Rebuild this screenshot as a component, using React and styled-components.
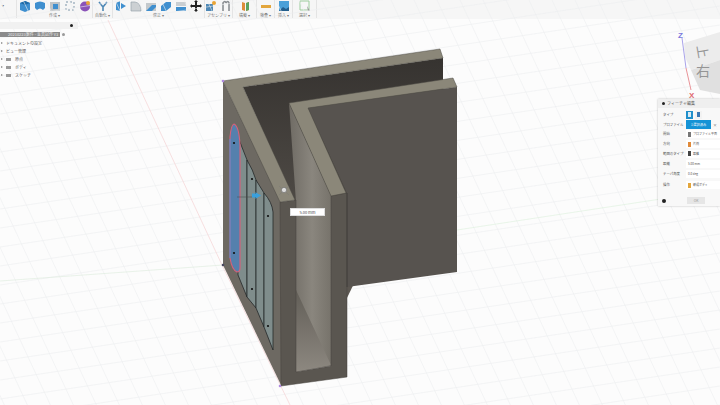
import React from "react";
import styled, { createGlobalStyle } from "styled-components";

const Global = createGlobalStyle`
  html, body { margin: 0; padding: 0; background: #fff; }
  body { font-family: "Noto Sans CJK JP", "Noto Sans", sans-serif; }
`;

const Screen = styled.div`
  position: relative;
  width: 720px;
  height: 405px;
  overflow: hidden;
  background: #fcfcfc;
  display: flex;
  flex-direction: column;
`;

const Toolbar = styled.div`
  height: 19px;
  display: flex;
  flex: none;
  align-items: flex-start;
  background: #f6f6f6;
`;

const LeadGroup = styled.div`
  width: 17px;
  height: 18px;
  flex: none;
  box-sizing: border-box;
  border-right: 1px solid #e4e4e4;
  font-size: 4px;
  line-height: 10px;
  color: #777;
  padding-left: 2px;
`;

const Group = styled.div`
  width: ${(p) => p.$w}px;
  height: 18px;
  flex: none;
  display: flex;
  flex-direction: column;
  align-items: center;
  border-right: 1px solid #e4e4e4;
  box-sizing: border-box;
`;

const IconRow = styled.div`
  height: 12px;
  display: flex;
  gap: 3px;
  justify-content: center;
  align-items: flex-start;
`;

const GroupLabel = styled.div`
  font-size: 4px;
  line-height: 4px;
  margin-top: 1px;
  color: #777;
  white-space: nowrap;
`;

const Stage = styled.div`
  position: relative;
  flex: 1;
`;

const Canvas = styled.svg`
  position: absolute;
  left: 0;
  top: -19px;
  width: 720px;
  height: 405px;
  display: block;
`;

const Browser = styled.div`
  position: absolute;
  left: 0;
  top: 3px;
  width: 78px;
  display: flex;
  flex-direction: column;
  color: #5c5c5c;
`;

const BrowserHead = styled.div`
  height: 7px;
  background: #f1f1f1;
  display: flex;
  justify-content: flex-end;
  align-items: center;
  padding-right: 5px;
  margin-bottom: 3px;
`;

const Dot = styled.span`
  width: ${(p) => p.$s || 3}px;
  height: ${(p) => p.$s || 3}px;
  border-radius: 50%;
  background: ${(p) => p.$c || "#222"};
  flex: none;
`;

const TitleRow = styled.div`
  display: flex;
  align-items: center;
  gap: 2px;
  margin-bottom: 2px;
`;

const DocTitle = styled.div`
  height: 5px;
  width: 52px;
  background: #8b8b8b;
  color: #eee;
  font-size: 4px;
  line-height: 5px;
  padding-left: 8px;
  white-space: nowrap;
  overflow: hidden;
`;

const Node = styled.div`
  height: 8px;
  display: flex;
  align-items: center;
  gap: 3px;
  padding-left: 1px;
  font-size: 4px;
  white-space: nowrap;
`;

const Arrow = styled.span`
  width: 0;
  height: 0;
  border-left: 2px solid #888;
  border-top: 1px solid transparent;
  border-bottom: 1px solid transparent;
  flex: none;
`;

const Folder = styled.span`
  width: 5px;
  height: 3px;
  background: #9a9a9a;
  margin-right: 1px;
  flex: none;
`;

const Dim = styled.div`
  position: absolute;
  left: 290px;
  top: 189px;
  width: 35px;
  height: 8px;
  background: #fff;
  border: 1px solid #ddd;
  box-sizing: border-box;
  font-size: 4px;
  line-height: 6px;
  color: #444;
  display: flex;
  justify-content: center;
`;

const Dialog = styled.div`
  position: absolute;
  left: 658px;
  top: 80px;
  width: 62px;
  height: 107px;
  background: #f8f8f8;
  box-shadow: 0 0 2px rgba(0, 0, 0, 0.25);
  display: flex;
  flex-direction: column;
  color: #555;
  font-size: 4px;
  line-height: 6px;
`;

const DialogTitle = styled.div`
  height: 9px;
  display: flex;
  align-items: center;
  gap: 2px;
  padding-left: 4px;
  background: #efefef;
  white-space: nowrap;
  margin-bottom: 2px;
`;

const Row = styled.div`
  height: ${(p) => p.$h || 10}px;
  display: flex;
  align-items: center;
  padding-left: 5px;
  white-space: nowrap;
`;

const RowLabel = styled.span`
  width: 23px;
  flex: none;
  font-size: 3.4px;
`;

const Field = styled.span`
  display: flex;
  align-items: center;
  gap: 2px;
  height: 8px;
  width: 34px;
  padding-left: 2px;
  background: #fff;
  box-sizing: border-box;
  font-size: 3px;
  overflow: hidden;
`;

const TypeBtn = styled.span`
  width: 7px;
  height: 8px;
  margin-right: 2px;
  background: ${(p) => (p.$on ? "#1f8fcb" : "#f2f2f2")};
  display: flex;
  align-items: center;
  justify-content: center;
`;

const Swatch = styled.span`
  width: 3px;
  height: 5px;
  background: ${(p) => p.$c || "#3b78b5"};
  flex: none;
`;

const ProfileBtn = styled.span`
  width: 25px;
  height: 9px;
  background: #1593d6;
  color: #fff;
  display: flex;
  align-items: center;
  justify-content: center;
  gap: 1px;
  font-size: 3.2px;
`;

const Close = styled.span`
  color: #555;
  font-size: 4px;
  margin-left: 2px;
`;

const Footer = styled.div`
  margin-top: 3px;
  height: 11px;
  display: flex;
  align-items: center;
  padding-left: 4px;
  gap: 21px;
`;

const OkBtn = styled.span`
  width: 18px;
  height: 7px;
  background: #e6e6e6;
  color: #999;
  text-align: center;
  font-size: 3.4px;
  line-height: 7px;
`;

const Tile = ({ c1 = "#3f8fcf", c2 = "#1f6ba8", kind = "box" }) => (
  <svg width="12" height="12" viewBox="0 0 12 12">
    {kind === "box" && <path d="M1 3l5-2 5 2v7l-5 2-5-2z" fill={c1} />}
    {kind === "box" && <path d="M1 3l5 2 5-2-5-2z" fill={c2} />}
    {kind === "wave" && <path d="M1 3q5-3 10 0v5l-2 2q-3-3-6 0l-2-2z" fill={c1} />}
    {kind === "shell" && <path d="M1 2h10v9H1z" fill="#bfc3c6" />}
    {kind === "shell" && <path d="M4 4h5v5H4z" fill={c1} />}
    {kind === "sel" && <path d="M2 2h8v8H2z" fill="none" stroke="#7d95a8" strokeDasharray="2 2" />}
    {kind === "purple" && <circle cx="6" cy="6.5" r="5" fill="#8a52b8" />}
    {kind === "purple" && <circle cx="9" cy="3" r="2" fill="#e9a436" />}
    {kind === "branch" && <path d="M2 2l4 5 4-5M6 7v4" stroke="#4d87b5" strokeWidth="1.6" fill="none" />}
    {kind === "press" && <path d="M1 3l4-2v10l-4-1zM6 3l5 3-5 3z" fill={c1} />}
    {kind === "fillet" && <path d="M1 11V2h4q6 1 6 9z" fill="#ccd0d3" stroke="#8d9aa5" strokeWidth=".6" />}
    {kind === "cham" && <path d="M1 3h10v8H1z" fill="#c4c9cc" />}
    {kind === "cham" && <path d="M1 11l6-6h4v2l-4 4z" fill={c1} />}
    {kind === "two" && <path d="M1 6l5-4h5v5l-5 4H1z" fill={c1} />}
    {kind === "stack" && <path d="M1 2h10v4H1z" fill="#c9ced2" />}
    {kind === "stack" && <path d="M1 7h10v4H1z" fill={c1} />}
    {kind === "move" && <path d="M6 0l2 2H7v3h3V4l2 2-2 2V7H7v3h1l-2 2-2-2h1V7H2v1L0 6l2-2v1h3V2H4z" fill="#222" />}
    {kind === "asm" && <path d="M1 4h7v7H1z" fill="#4d87b5" />}
    {kind === "asm" && <circle cx="9" cy="3" r="2" fill="#e9a436" />}
    {kind === "joint" && <path d="M3 11V3q2-3 3 0M6 3q2-3 3 0v8" stroke="#8b8f93" strokeWidth="1.6" fill="none" />}
    {kind === "plane" && <path d="M3 2l3 1v8l-3-1zM7 3l3-1v8l-3 1z" fill="#dd8c3a" />}
    {kind === "plane" && <path d="M7 3l3-1v8l-3 1z" fill="#5ba35f" />}
    {kind === "ruler" && <path d="M1 5h10v3H1z" fill="#e3a63c" />}
    {kind === "photo" && <path d="M1 1h10v10H1z" fill="#4aa0d8" />}
    {kind === "photo" && <path d="M1 11l4-4 3 2 3-2v4z" fill="#235f8d" />}
    {kind === "cursor" && <path d="M1 1h9v9H1z" fill="none" stroke="#9ccc9c" />}
    {kind === "cursor" && <path d="M8 6l3 5-2 0z" fill="#999" />}
  </svg>
);

const groups = [
  { w: 76, label: "作成 ▾", icons: ["box", "wave", "shell", "sel", "purple"] },
  { w: 20, label: "自動化 ▾", icons: ["branch"] },
  { w: 92, label: "修正 ▾", icons: ["press", "fillet", "cham", "two", "stack", "move"] },
  { w: 28, label: "アセンブリ ▾", icons: ["asm", "joint"] },
  { w: 24, label: "構築 ▾", icons: ["plane"] },
  { w: 18, label: "検査 ▾", icons: ["ruler"] },
  { w: 18, label: "挿入 ▾", icons: ["photo"] },
  { w: 24, label: "選択 ▾", icons: ["cursor"] },
];

const gridLines = () => {
  const out = [];
  for (let i = -12; i < 50; i++) {
    const x = i * 23;
    out.push(<line key={"a" + i} x1={x - 60} y1={-60 * 2.15} x2={x + 400} y2={400 * 2.15} stroke="#eceef0" strokeWidth=".6" />);
  }
  for (let i = -6; i < 60; i++) {
    const y = i * 19;
    out.push(<line key={"b" + i} x1={0} y1={y} x2={720} y2={y - 720 * 0.15} stroke="#eceef0" strokeWidth=".6" />);
  }
  return out;
};

const Slot = ({ d }) => <path d={d} fill="#7f8d8c" stroke="#24282a" strokeWidth=".8" />;

const Model = () => (
  <g>
    <defs>
      <linearGradient id="cav" x1="0" y1="0" x2="0" y2="1">
        <stop offset="0" stopColor="#363330" />
        <stop offset="1" stopColor="#5e5953" />
      </linearGradient>
      <linearGradient id="inner" x1="0" y1="0" x2="1" y2="0">
        <stop offset="0" stopColor="#6f6b64" />
        <stop offset="0.55" stopColor="#8a867e" />
        <stop offset="1" stopColor="#77736b" />
      </linearGradient>
      <linearGradient id="floor" x1="0" y1="0" x2="0" y2="1">
        <stop offset="0" stopColor="#625e57" />
        <stop offset="1" stopColor="#8d8880" />
      </linearGradient>
    </defs>
    <path d="M243 87L443 58V100L346 300L296 205Z" fill="url(#cav)" />
    <path d="M308 108L457 87V272L347 287V193Z" fill="#57534f" />
    <path d="M289 103L331 196V366L296 372V202Z" fill="url(#inner)" />
    <path d="M296 290L331 365L296 372Z" fill="url(#floor)" />
    <path d="M223 81L281 202V385L223 265Z" fill="#6d6962" />
    <Slot d="M238 137L247 160V297L238 275Z" />
    <Slot d="M247 160Q253 170 256 180V308L247 297Z" />
    <Slot d="M256 180L264 193V327L256 308Z" />
    <Slot d="M264 193Q272 202 273 212V350L264 327Z" />
    <path d="M230 137Q231 125 234 124Q239 126 240 145V268Q240 272 237 272Q232 270 230 258Z" fill="#5580ad" stroke="#d9607a" strokeWidth="1.1" />
    <path d="M230 139V258" stroke="#4c8fda" strokeWidth="1" />
    <circle cx="234" cy="143" r="1.1" fill="#111" />
    <circle cx="252" cy="179" r="1.1" fill="#111" />
    <circle cx="268" cy="216" r="1.1" fill="#111" />
    <circle cx="234" cy="253" r="1.1" fill="#111" />
    <circle cx="252" cy="289" r="1.1" fill="#111" />
    <circle cx="268" cy="326" r="1.1" fill="#111" />
    <path d="M237 197H252" stroke="#444" strokeWidth=".5" />
    <path d="M252 193.500h4l-1-1.500 6 3.500-6 3.500 1-1.500h-4z" fill="#39a0dc" />
    <path d="M280 202L296 200V372L331 366V196L347 193V377L281 386Z" fill="#5a5650" stroke="#46433f" strokeWidth=".5" />
    <path d="M289 103L453 78L457 87L308 108L346 193L331 196Z" fill="#8b8779" stroke="#4c4a45" strokeWidth=".5" />
    <path d="M223 81L440 49L443 58L243 87L295 200L280 202Z" fill="#8b8779" stroke="#4c4a45" strokeWidth=".5" />
    <path d="M347 193V287" stroke="#3d3a36" strokeWidth=".7" />
    <path d="M279 186l10 9M289 186l-10 9" stroke="#777" strokeWidth=".4" />
    <circle cx="284" cy="190" r="2.600" fill="#ddd" stroke="#666" strokeWidth=".6" />
    <circle cx="223" cy="81" r="1.300" fill="#b08ae0" />
    <circle cx="223" cy="265" r="1.300" fill="#4a4a60" />
    <circle cx="280" cy="386" r="1.300" fill="#b08ae0" />
  </g>
);

const Cube = () => (
  <g>
    <path d="M684 43L720 32V60L691 70L685 57Z" fill="#ececec" />
    <path d="M691 70L720 60V94L700 90Z" fill="#e0e0e0" />
    <text x="696" y="57" fontSize="13" fill="#959595" fontFamily="Noto Sans CJK JP" transform="rotate(80 703 52)">上</text>
    <text x="696" y="76" fontSize="14" fill="#959595" fontFamily="Noto Sans CJK JP">右</text>
    <path d="M682 38L686 68" stroke="#a9a3ea" strokeWidth="1" />
    <path d="M686 68L691 90" stroke="#e99499" strokeWidth="1" />
    <text x="678" y="38" fontSize="8" fill="#7a78dd" fontFamily="Liberation Sans" fontWeight="700">Z</text>
    <text x="689" y="98" fontSize="8" fill="#e06a70" fontFamily="Liberation Sans" fontWeight="700">X</text>
  </g>
);

export default function App() {
  return (
    <Screen>
      <Global />
      <Toolbar>
        <LeadGroup>▾</LeadGroup>
        {groups.map((g) => (
          <Group key={g.label} $w={g.w}>
            <IconRow>
              {g.icons.map((k, i) => (
                <Tile key={i} kind={k} />
              ))}
            </IconRow>
            <GroupLabel>{g.label}</GroupLabel>
          </Group>
        ))}
      </Toolbar>
      <Stage>
        <Canvas viewBox="0 0 720 405">
          {gridLines()}
          <path d="M108 20L222 265L290 405" stroke="#f5d3d4" strokeWidth=".7" fill="none" />
          <path d="M0 281L223 265" stroke="#dcebdc" strokeWidth=".6" />
          <path d="M457 230L720 190" stroke="#dcf0dc" strokeWidth=".6" />
          <Model />
          <Cube />
        </Canvas>
        <Browser>
          <BrowserHead>
            <Dot />
          </BrowserHead>
          <TitleRow>
            <DocTitle>20210223案件 - 金具試作 v3</DocTitle>
            <Dot $c="#9a9a9a" />
          </TitleRow>
          <Node>
            <Arrow />
            <span>ドキュメントの設定</span>
          </Node>
          <Node>
            <Arrow />
            <span>ビュー管理</span>
          </Node>
          <Node>
            <Arrow />
            <Folder />
            <span>原点</span>
          </Node>
          <Node>
            <Arrow />
            <Folder />
            <span>ボディ</span>
          </Node>
          <Node>
            <Arrow />
            <Folder />
            <span>スケッチ</span>
          </Node>
        </Browser>
        <Dim>5.00 mm</Dim>
        <Dialog>
          <DialogTitle>
            <Dot />
            <span>フィーチャ編集</span>
          </DialogTitle>
          <Row>
            <RowLabel>タイプ</RowLabel>
            <TypeBtn $on>
              <Swatch $c="#d8eaf5" />
            </TypeBtn>
            <TypeBtn>
              <Swatch />
            </TypeBtn>
          </Row>
          <Row>
            <RowLabel>プロファイル</RowLabel>
            <ProfileBtn>1 選択済み</ProfileBtn>
            <Close>×</Close>
          </Row>
          <Row>
            <RowLabel>開始</RowLabel>
            <Field>
              <Swatch $c="#777" />
              プロファイル平面
            </Field>
          </Row>
          <Row>
            <RowLabel>方向</RowLabel>
            <Field>
              <Swatch $c="#e08a3a" />
              片側
            </Field>
          </Row>
          <Row>
            <RowLabel>範囲のタイプ</RowLabel>
            <Field>
              <Swatch $c="#444" />
              距離
            </Field>
          </Row>
          <Row>
            <RowLabel>距離</RowLabel>
            <Field>5.00 mm</Field>
          </Row>
          <Row>
            <RowLabel>テーパ角度</RowLabel>
            <Field>0.0 deg</Field>
          </Row>
          <Row $h={14}>
            <RowLabel>操作</RowLabel>
            <Field>
              <Swatch $c="#e3a63c" />
              新規ボディ
            </Field>
          </Row>
          <Footer>
            <Dot $s={4} />
            <OkBtn>OK</OkBtn>
          </Footer>
        </Dialog>
      </Stage>
    </Screen>
  );
}
